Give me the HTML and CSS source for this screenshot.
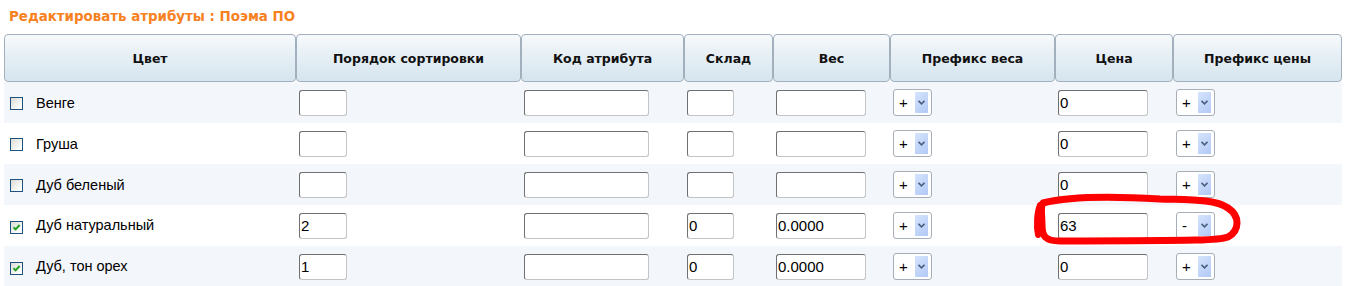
FILE: index.html
```html
<!DOCTYPE html>
<html lang="ru">
<head>
    <meta charset="UTF-8">
    <title>Редактировать атрибуты</title>
    <link rel="stylesheet" href="styles.css">
</head>
<body>
    <h1 class="title">Редактировать атрибуты : Поэма ПО</h1>

    <table class="attrs">
        <colgroup>
            <col class="c-name">
            <col class="c-sort">
            <col class="c-code">
            <col class="c-stock">
            <col class="c-weight">
            <col class="c-wprefix">
            <col class="c-price">
            <col class="c-pprefix">
        </colgroup>
        <thead>
            <tr>
                <th>Цвет</th>
                <th>Порядок сортировки</th>
                <th>Код атрибута</th>
                <th>Склад</th>
                <th>Вес</th>
                <th>Префикс веса</th>
                <th>Цена</th>
                <th>Префикс цены</th>
            </tr>
        </thead>
        <tbody>
            <tr class="odd">
                <td class="name"><span class="box"></span>Венге</td>
                <td><input class="in-sort" type="text" value=""></td>
                <td><input class="in-code" type="text" value=""></td>
                <td><input class="in-stock" type="text" value=""></td>
                <td><input class="in-weight" type="text" value=""></td>
                <td><div class="sel"><span class="sel-val">+</span><span class="sel-btn"><svg width="7" height="5" viewBox="0 0 7 5"><path d="M0.5 0.8 L3.5 3.8 L6.5 0.8" fill="none" stroke="#4b5f82" stroke-width="1.6"/></svg></span></div></td>
                <td><input class="in-price" type="text" value="0"></td>
                <td><div class="sel"><span class="sel-val">+</span><span class="sel-btn"><svg width="7" height="5" viewBox="0 0 7 5"><path d="M0.5 0.8 L3.5 3.8 L6.5 0.8" fill="none" stroke="#4b5f82" stroke-width="1.6"/></svg></span></div></td>
            </tr>
            <tr>
                <td class="name"><span class="box"></span>Груша</td>
                <td><input class="in-sort" type="text" value=""></td>
                <td><input class="in-code" type="text" value=""></td>
                <td><input class="in-stock" type="text" value=""></td>
                <td><input class="in-weight" type="text" value=""></td>
                <td><div class="sel"><span class="sel-val">+</span><span class="sel-btn"><svg width="7" height="5" viewBox="0 0 7 5"><path d="M0.5 0.8 L3.5 3.8 L6.5 0.8" fill="none" stroke="#4b5f82" stroke-width="1.6"/></svg></span></div></td>
                <td><input class="in-price" type="text" value="0"></td>
                <td><div class="sel"><span class="sel-val">+</span><span class="sel-btn"><svg width="7" height="5" viewBox="0 0 7 5"><path d="M0.5 0.8 L3.5 3.8 L6.5 0.8" fill="none" stroke="#4b5f82" stroke-width="1.6"/></svg></span></div></td>
            </tr>
            <tr class="odd">
                <td class="name"><span class="box"></span>Дуб беленый</td>
                <td><input class="in-sort" type="text" value=""></td>
                <td><input class="in-code" type="text" value=""></td>
                <td><input class="in-stock" type="text" value=""></td>
                <td><input class="in-weight" type="text" value=""></td>
                <td><div class="sel"><span class="sel-val">+</span><span class="sel-btn"><svg width="7" height="5" viewBox="0 0 7 5"><path d="M0.5 0.8 L3.5 3.8 L6.5 0.8" fill="none" stroke="#4b5f82" stroke-width="1.6"/></svg></span></div></td>
                <td><input class="in-price" type="text" value="0"></td>
                <td><div class="sel"><span class="sel-val">+</span><span class="sel-btn"><svg width="7" height="5" viewBox="0 0 7 5"><path d="M0.5 0.8 L3.5 3.8 L6.5 0.8" fill="none" stroke="#4b5f82" stroke-width="1.6"/></svg></span></div></td>
            </tr>
            <tr>
                <td class="name"><span class="box checked"><svg width="9" height="9" viewBox="0 0 9 9"><path d="M1.5 4.2 L3.6 6.4 L7.6 2" fill="none" stroke="#21a121" stroke-width="2"/></svg></span>Дуб натуральный</td>
                <td><input class="in-sort" type="text" value="2"></td>
                <td><input class="in-code" type="text" value=""></td>
                <td><input class="in-stock" type="text" value="0"></td>
                <td><input class="in-weight" type="text" value="0.0000"></td>
                <td><div class="sel"><span class="sel-val">+</span><span class="sel-btn"><svg width="7" height="5" viewBox="0 0 7 5"><path d="M0.5 0.8 L3.5 3.8 L6.5 0.8" fill="none" stroke="#4b5f82" stroke-width="1.6"/></svg></span></div></td>
                <td><input class="in-price" type="text" value="63"></td>
                <td><div class="sel"><span class="sel-val">-</span><span class="sel-btn"><svg width="7" height="5" viewBox="0 0 7 5"><path d="M0.5 0.8 L3.5 3.8 L6.5 0.8" fill="none" stroke="#4b5f82" stroke-width="1.6"/></svg></span></div></td>
            </tr>
            <tr class="odd">
                <td class="name"><span class="box checked"><svg width="9" height="9" viewBox="0 0 9 9"><path d="M1.5 4.2 L3.6 6.4 L7.6 2" fill="none" stroke="#21a121" stroke-width="2"/></svg></span>Дуб, тон орех</td>
                <td><input class="in-sort" type="text" value="1"></td>
                <td><input class="in-code" type="text" value=""></td>
                <td><input class="in-stock" type="text" value="0"></td>
                <td><input class="in-weight" type="text" value="0.0000"></td>
                <td><div class="sel"><span class="sel-val">+</span><span class="sel-btn"><svg width="7" height="5" viewBox="0 0 7 5"><path d="M0.5 0.8 L3.5 3.8 L6.5 0.8" fill="none" stroke="#4b5f82" stroke-width="1.6"/></svg></span></div></td>
                <td><input class="in-price" type="text" value="0"></td>
                <td><div class="sel"><span class="sel-val">+</span><span class="sel-btn"><svg width="7" height="5" viewBox="0 0 7 5"><path d="M0.5 0.8 L3.5 3.8 L6.5 0.8" fill="none" stroke="#4b5f82" stroke-width="1.6"/></svg></span></div></td>
            </tr>
        </tbody>
    </table>

    <!-- hand-drawn highlight over the price of row 4 -->
    <svg class="mark" width="1346" height="286" viewBox="0 0 1346 286">
        <path d="M1043,203 C1070,196 1110,196 1160,199 C1190,200 1215,199 1228,208 C1240,216 1240,230 1228,237 C1215,242 1150,240 1060,241 C1045,241 1042,236 1042,225 C1042,215 1040,207 1043,203 Z" fill="none" stroke="#f00" stroke-width="7" stroke-linejoin="round"/>
        <path d="M1038,235 C1036,225 1037,212 1040,205" fill="none" stroke="#f00" stroke-width="6" stroke-linecap="round"/>
    </svg>
</body>
</html>
```

FILE: styles.css
```css
body {
    margin: 0;
    padding: 0 4px;
    background-color: #fff;
    color: #000;
    font-family: "Liberation Sans", Arial, sans-serif;
    position: relative;
}
.title {
    margin: 0;
    height: 34px;
    box-sizing: border-box;
    padding: 9px 0 0 5px;
    font: bold 13.4px/15px "DejaVu Sans", sans-serif;
    color: #f7811f;
}
.attrs {
    width: 1338px;
    table-layout: fixed;
    border-collapse: separate;
    border-spacing: 0;
}
.c-name { width: 292px; }
.c-sort { width: 225px; }
.c-code { width: 163px; }
.c-stock { width: 89px; }
.c-weight { width: 117px; }
.c-wprefix { width: 165px; }
.c-price { width: 118px; }
.c-pprefix { width: 169px; }
.attrs th {
    height: 46px;
    padding: 0;
    border: 1px solid #a2b0bd;
    border-radius: 4px;
    background: linear-gradient(#f7fafc, #e6eff5 45%, #d6e5ef);
    font: bold 12.5px "DejaVu Sans", sans-serif;
    color: #111;
    text-align: center;
}
.attrs td {
    height: 41px;
    padding: 0 2px 0 3px;
    vertical-align: middle;
    font-size: 14.5px;
}
.attrs tr.odd td {
    background-color: #f3f6fb;
}
.attrs td.name {
    padding-left: 6px;
}
.box {
    display: inline-flex;
    align-items: center;
    justify-content: center;
    width: 13px;
    height: 13px;
    box-sizing: border-box;
    margin-right: 13px;
    vertical-align: -2px;
    border: 1px solid #1c5180;
    background: linear-gradient(135deg, #dcdcd4, #fff 85%);
}
input {
    height: 26px;
    box-sizing: border-box;
    margin: 0;
    padding: 0 2px 0 1px;
    border: 1px solid;
    border-color: #707070 #c4c4c4 #c4c4c4 #707070;
    border-radius: 3px;
    background: #fff;
    font: 15px "Liberation Sans", Arial, sans-serif;
    color: #000;
    vertical-align: middle;
}
.in-sort { width: 48px; }
.in-code { width: 125px; }
.in-stock { width: 47px; }
.in-weight { width: 90px; }
.in-price { width: 90px; }
.sel {
    display: inline-flex;
    align-items: center;
    width: 39px;
    height: 27px;
    box-sizing: border-box;
    padding: 0 3px 0 5px;
    border: 1px solid #a7aeb6;
    border-radius: 3px;
    background: #fff;
    vertical-align: middle;
    font-size: 15px;
}
.sel-val {
    flex: 1;
}
.sel-btn {
    display: flex;
    align-items: center;
    justify-content: center;
    width: 13px;
    height: 21px;
    background: linear-gradient(135deg, #d6e4fd, #b1c9f5);
}
.mark {
    position: absolute;
    top: 0;
    left: 0;
    pointer-events: none;
    filter: blur(0.6px);
}
```
